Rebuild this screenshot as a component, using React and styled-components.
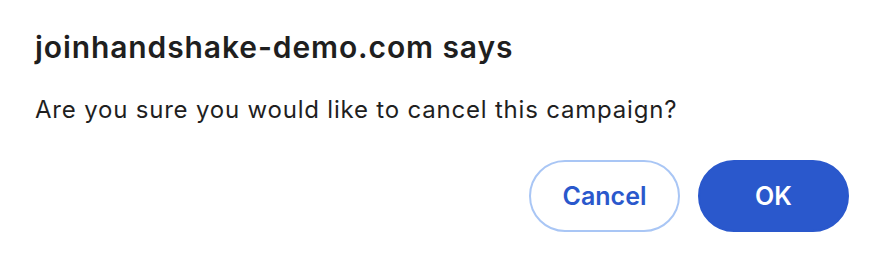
import styled, { createGlobalStyle } from "styled-components";

const Global = createGlobalStyle`
  html, body {
    margin: 0;
    padding: 0;
    background: #ffffff;
  }
  body {
    font-family: Inter, "Noto Sans", "Liberation Sans", sans-serif;
    -webkit-font-smoothing: antialiased;
  }
`;

const Dialog = styled.div`
  width: 882px;
  height: 260px;
  box-sizing: border-box;
  padding: 29px 33px 28px 35px;
  display: flex;
  flex-direction: column;
  background: #ffffff;
`;

const Title = styled.h1`
  margin: 0;
  font-size: 30px;
  line-height: 36px;
  font-weight: 600;
  letter-spacing: 0.9px;
  color: #1f1f1f;
`;

const Message = styled.p`
  margin: 30px 0 0;
  font-size: 24px;
  line-height: 30px;
  font-weight: 400;
  letter-spacing: 0.8px;
  color: #1f1f1f;
`;

const Actions = styled.div`
  margin-top: auto;
  display: flex;
  justify-content: flex-end;
  gap: 18px;
`;

const Button = styled.button`
  width: 151px;
  height: 72px;
  box-sizing: border-box;
  border-radius: 36px;
  font-family: inherit;
  font-size: 25px;
  font-weight: 600;
  cursor: pointer;
  border: 2px solid ${(p) => (p.$primary ? "#2a58cc" : "#a9c6f5")};
  background: ${(p) => (p.$primary ? "#2a58cc" : "#ffffff")};
  color: ${(p) => (p.$primary ? "#ffffff" : "#2a58cc")};
`;

export default function App() {
  return (
    <>
      <Global />
      <Dialog>
        <Title>joinhandshake-demo.com says</Title>
        <Message>Are you sure you would like to cancel this campaign?</Message>
        <Actions>
          <Button>Cancel</Button>
          <Button $primary>OK</Button>
        </Actions>
      </Dialog>
    </>
  );
}
